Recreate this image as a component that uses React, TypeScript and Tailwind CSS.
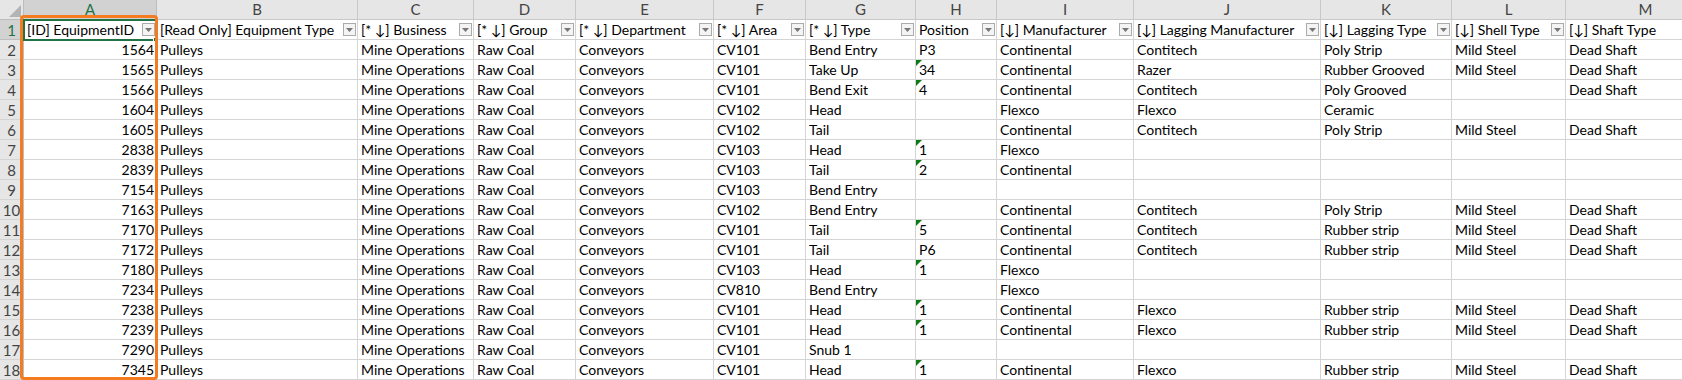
import React from "react";

const cols = ["A", "B", "C", "D", "E", "F", "G", "H", "I", "J", "K", "L", "M"];
const headers = [
  "[ID] EquipmentID",
  "[Read Only] Equipment Type",
  "[* ↓] Business",
  "[* ↓] Group",
  "[* ↓] Department",
  "[* ↓] Area",
  "[* ↓] Type",
  "Position",
  "[↓] Manufacturer",
  "[↓] Lagging Manufacturer",
  "[↓] Lagging Type",
  "[↓] Shell Type",
  "[↓] Shaft Type",
];

type Row = [string, string, string, string, string, string, string, string, string, boolean];

const rows: Row[] = [
  ["1564", "CV101", "Bend Entry", "P3", "Continental", "Contitech", "Poly Strip", "Mild Steel", "Dead Shaft", false],
  ["1565", "CV101", "Take Up", "34", "Continental", "Razer", "Rubber Grooved", "Mild Steel", "Dead Shaft", true],
  ["1566", "CV101", "Bend Exit", "4", "Continental", "Contitech", "Poly Grooved", "", "Dead Shaft", true],
  ["1604", "CV102", "Head", "", "Flexco", "Flexco", "Ceramic", "", "", false],
  ["1605", "CV102", "Tail", "", "Continental", "Contitech", "Poly Strip", "Mild Steel", "Dead Shaft", false],
  ["2838", "CV103", "Head", "1", "Flexco", "", "", "", "", true],
  ["2839", "CV103", "Tail", "2", "Continental", "", "", "", "", true],
  ["7154", "CV103", "Bend Entry", "", "", "", "", "", "", false],
  ["7163", "CV102", "Bend Entry", "", "Continental", "Contitech", "Poly Strip", "Mild Steel", "Dead Shaft", false],
  ["7170", "CV101", "Tail", "5", "Continental", "Contitech", "Rubber strip", "Mild Steel", "Dead Shaft", true],
  ["7172", "CV101", "Tail", "P6", "Continental", "Contitech", "Rubber strip", "Mild Steel", "Dead Shaft", false],
  ["7180", "CV103", "Head", "1", "Flexco", "", "", "", "", true],
  ["7234", "CV810", "Bend Entry", "", "Flexco", "", "", "", "", false],
  ["7238", "CV101", "Head", "1", "Continental", "Flexco", "Rubber strip", "Mild Steel", "Dead Shaft", true],
  ["7239", "CV101", "Head", "1", "Continental", "Flexco", "Rubber strip", "Mild Steel", "Dead Shaft", true],
  ["7290", "CV101", "Snub 1", "", "", "", "", "", "", false],
  ["7345", "CV101", "Head", "1", "Continental", "Flexco", "Rubber strip", "Mild Steel", "Dead Shaft", true],
];

const FilterBtn = () => (
  <div className="ml-auto mr-[1px] mt-[3px] flex h-[13px] w-[13px] shrink-0 items-center justify-center border border-[#ababab] bg-[#f4f4f4]">
    <svg width="7" height="4" viewBox="0 0 7 4">
      <polygon points="0,0 7,0 3.5,4" fill="#777" />
    </svg>
  </div>
);

const cell = "h-[20px] border-r border-b border-[#d4d4d4] overflow-hidden whitespace-nowrap leading-[20px]";

export default function App() {
  return (
    <div
      className="relative h-[380px] w-[1682px] overflow-hidden bg-white text-[14px] text-black"
      style={{ fontFamily: "Lato, 'Liberation Sans', sans-serif" }}
    >
      <div className="grid w-[1800px] grid-cols-[24px_133px_201px_116px_102px_138px_92px_110px_81px_137px_187px_131px_114px_160px]">
        {/* column letters row */}
        <div className="relative h-[20px] border-r border-b border-[#bdbdbd] bg-[#e6e6e6]">
          <svg className="absolute left-[9px] top-[5px]" width="12" height="12" viewBox="0 0 12 12">
            <polygon points="12,0 12,12 0,12" fill="#b4b4b4" />
          </svg>
        </div>
        {cols.map((c, i) => (
          <div
            key={c}
            className={
              "h-[20px] border-r border-b text-center text-[15px] leading-[19px] " +
              (i === 0
                ? "border-[#bdbdbd] bg-[#d2d2d2] text-[#217346]"
                : "border-[#c8c8c8] bg-[#e6e6e6] text-[#444]")
            }
          >
            {c}
          </div>
        ))}

        {/* header row 1 */}
        <div className="h-[20px] border-r border-b border-[#bdbdbd] bg-[#d2d2d2] text-center text-[15px] leading-[20px] text-[#217346]">1</div>
        {headers.map((h) => (
          <div key={h} className={cell + " flex pl-[3px]"}>
            <span>{h}</span>
            <FilterBtn />
          </div>
        ))}

        {rows.map((r, ri) => {
          const [id, area, type, pos, man, lagMan, lagType, shell, shaft, tri] = r;
          const vals = ["Pulleys", "Mine Operations", "Raw Coal", "Conveyors", area, type, pos, man, lagMan, lagType, shell, shaft];
          return (
            <React.Fragment key={id}>
              <div className="h-[20px] border-r border-b border-[#d4d4d4] border-r-[#bdbdbd] bg-[#e6e6e6] text-center text-[15px] leading-[20px] text-[#444]">
                {ri + 2}
              </div>
              <div className={cell + " pr-[2px] text-right"}>{id}</div>
              {vals.map((v, vi) => (
                <div key={vi} className={cell + " relative pl-[3px]"}>
                  {vi === 6 && tri && (
                    <svg className="absolute left-0 top-0" width="6" height="6" viewBox="0 0 6 6">
                      <polygon points="0,0 6,0 0,6" fill="#0e7a16" />
                    </svg>
                  )}
                  {v}
                </div>
              ))}
            </React.Fragment>
          );
        })}
      </div>

      {/* active cell A1 */}
      <div className="absolute left-[23px] top-[19px] h-[22px] w-[135px] border-2 border-[#217346]" />
      <div className="absolute left-[153px] top-[37px] h-[5px] w-[5px] border border-white bg-[#217346]" />

      {/* orange annotation */}
      <div className="absolute left-[20px] top-[15px] h-[365px] w-[138px] rounded-[4px] border-[3px] border-[#f47b20]" />
    </div>
  );
}
